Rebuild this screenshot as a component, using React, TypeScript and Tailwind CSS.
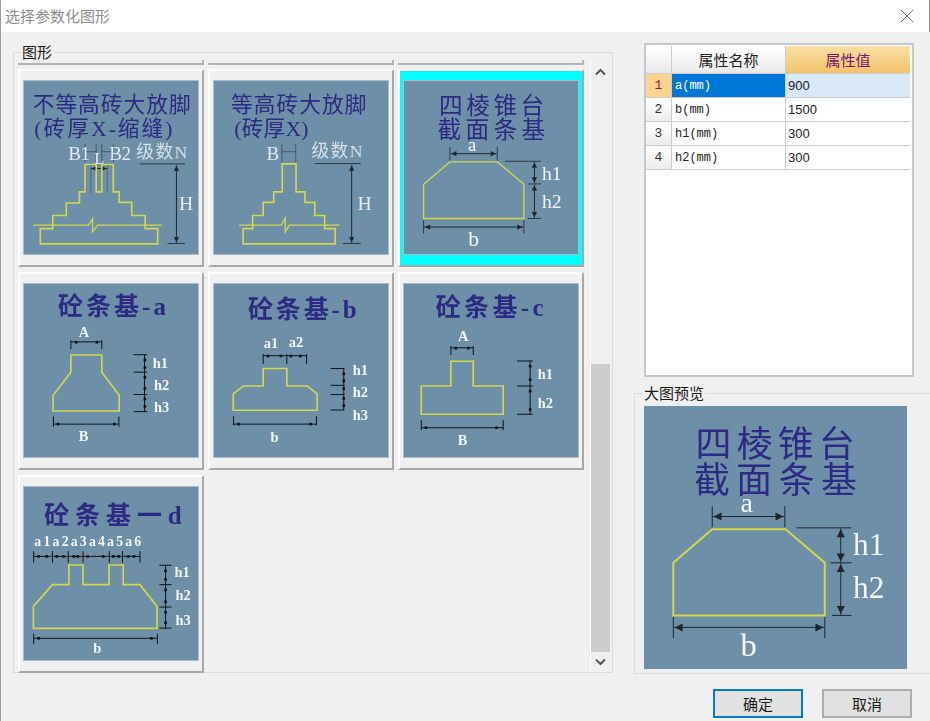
import React from 'react';

const SERIF = "'Liberation Serif','Noto Sans CJK SC',serif";
const INK = '#2c2a82';
const YELLOW = '#d2d84a';
const DARK = '#2f3a42';

type TProps = { x: number; y: number; size: number; w?: number; fill?: string; bold?: boolean; children: React.ReactNode };

const T = ({ x, y, size, w, fill = '#f4f6f8', bold, children }: TProps) => (
  <text
    x={x}
    y={y}
    fontSize={size}
    fill={fill}
    fontFamily={SERIF}
    fontWeight={bold ? 700 : 400}
    textLength={w}
    lengthAdjust={w ? 'spacing' : undefined}
  >
    {children}
  </text>
);

const Title = ({ x, y, size, w, bold, children }: TProps) => (
  <T x={x} y={y} size={size} w={w} bold={bold} fill={INK}>
    {children}
  </T>
);

const Shape = ({ pts, sw = 5 }: { pts: string; sw?: number }) => (
  <polygon points={pts} fill="none" stroke={YELLOW} strokeWidth={sw} />
);

const L = ({ d, sw = 3, c = DARK }: { d: string; sw?: number; c?: string }) => (
  <path d={d} fill="none" stroke={c} strokeWidth={sw} />
);

// dimension line with outward arrow heads
const HDim = ({ x1, x2, y, s = 16, sw = 3 }: { x1: number; x2: number; y: number; s?: number; sw?: number }) => (
  <g fill="#1f262b">
    <path d={`M${x1} ${y}H${x2}`} stroke="#1f262b" strokeWidth={sw} />
    <polygon points={`${x1 + 2},${y} ${x1 + 2 + s},${y - s / 2} ${x1 + 2 + s},${y + s / 2}`} />
    <polygon points={`${x2 - 2},${y} ${x2 - 2 - s},${y - s / 2} ${x2 - 2 - s},${y + s / 2}`} />
  </g>
);

const VDim = ({ x, y1, y2, s = 16, sw = 3 }: { x: number; y1: number; y2: number; s?: number; sw?: number }) => (
  <g fill="#1f262b">
    <path d={`M${x} ${y1}V${y2}`} stroke="#1f262b" strokeWidth={sw} />
    <polygon points={`${x},${y1 + 2} ${x - s / 2},${y1 + 2 + s} ${x + s / 2},${y1 + 2 + s}`} />
    <polygon points={`${x},${y2 - 2} ${x - s / 2},${y2 - 2 - s} ${x + s / 2},${y2 - 2 - s}`} />
  </g>
);

const Sq = ({ x, y }: { x: number; y: number }) => <rect x={x - 4} y={y - 4} width={8} height={8} fill="#111" />;

const Pic = ({ box, children }: { box: string; children: React.ReactNode }) => (
  <svg viewBox={box} className="h-[175px] w-[176px] border border-[#a9bdcc] bg-[#6d8fa8] blur-[0.3px]">
    {children}
  </svg>
);

const Unequal = () => (
  <Pic box="70 241 526 526">
    <Title x={95} y={334} size={66} w={480}>不等高砖大放脚</Title>
    <Title x={100} y={408} size={66} w={420}>(砖厚X-缩缝)</Title>
    <L d="M254 432V488M288 432V488M305 432V488M340 432V488M254 456H288M305 456H340" c="#4a5a66" />
    <L d="M272 495V580M322 495V580" sw={2} c="#4a5a66" />
    <T x={203} y={480} size={58} w={66} fill="#e4ebf0">B1</T>
    <T x={328} y={480} size={58} w={66} fill="#e4ebf0">B2</T>
    <T x={410} y={474} size={54} w={155} fill="#d6e0e6">级数N</T>
    <T x={282} y={494} size={50} fill="#e4ebf0">L</T>
    <T x={540} y={632} size={60} fill="#e4ebf0">H</T>
    <HDim x1={272} x2={322} y={507} s={14} />
    <L d="M420 493H558M505 735H558" />
    <VDim x={532} y1={497} y2={733} />
    <Shape pts="118,690 118,736 475,736 475,690 437,690 437,650 396,650 396,610 358,610 358,578 340,578 340,495 305,495 305,578 288,578 288,495 254,495 254,578 237,578 237,612 197,612 197,650 156,650 156,690" />
    <polyline points="97,679 265,679 277,660 277,700 292,679 488,679" fill="none" stroke={YELLOW} strokeWidth={4} />
  </Pic>
);

const Equal = () => (
  <Pic box="640 241 526 526">
    <Title x={690} y={334} size={66} w={412}>等高砖大放脚</Title>
    <Title x={700} y={408} size={66} w={226}>(砖厚X)</Title>
    <T x={798} y={480} size={58} fill="#e4ebf0">B</T>
    <T x={935} y={473} size={54} w={155} fill="#d6e0e6">级数N</T>
    <T x={1075} y={634} size={60} fill="#e4ebf0">H</T>
    <L d="M845 432V488M887 432V488M845 456H887" c="#4a5a66" />
    <L d="M945 492H1085M1030 735H1085" />
    <VDim x={1057} y1={496} y2={733} />
    <Shape pts="727,690 727,736 1007,736 1007,690 975,690 975,650 945,650 945,610 915,610 915,578 888,578 888,493 846,493 846,578 820,578 820,610 788,610 788,650 756,650 756,690" />
    <polyline points="715,679 843,679 855,658 855,700 868,679 1020,679" fill="none" stroke={YELLOW} strokeWidth={4} />
  </Pic>
);

const Frustum = () => (
  <Pic box="40 242 526 526">
    <Title x={145} y={342} size={72} w={320}>四棱锥台</Title>
    <Title x={140} y={415} size={72} w={328}>截面条基</Title>
    <T x={233} y={454} size={56}>a</T>
    <T x={458} y={543} size={60}>h1</T>
    <T x={458} y={628} size={60}>h2</T>
    <T x={234} y={743} size={66}>b</T>
    <L d="M178 442V484M322 442V484M345 486H455M415 555H455M415 660H455M98 665V706M403 665V706" />
    <HDim x1={180} x2={320} y={463} />
    <VDim x={435} y1={488} y2={553} />
    <VDim x={435} y1={557} y2={658} />
    <HDim x1={100} x2={401} y={686} />
    <Shape pts="178,488 323,488 403,556 403,660 98,660 98,556" sw={4} />
  </Pic>
);

const BaseA = () => (
  <Pic box="70 54 526 526">
    <Title x={172} y={148} size={76} w={328} bold>砼条基-a</Title>
    <T x={235} y={215} size={44} bold>A</T>
    <T x={460} y={308} size={44} bold>h1</T>
    <T x={464} y={376} size={44} bold>h2</T>
    <T x={464} y={442} size={44} bold>h3</T>
    <T x={235} y={530} size={44} bold>B</T>
    <L d="M211 225V252M305 225V252M211 230H305M402 269H443M402 322H443M402 390H443M402 442H443M435 269V442M158 457V488M357 457V488M158 480H357" c="#111" />
    <Sq x={227} y={231} /><Sq x={290} y={231} />
    <Sq x={436} y={285} /><Sq x={436} y={308} /><Sq x={436} y={338} /><Sq x={436} y={372} /><Sq x={436} y={404} /><Sq x={436} y={426} />
    <Sq x={172} y={480} /><Sq x={343} y={480} />
    <Shape pts="211,270 305,270 305,322 358,392 358,440 157,440 157,392 211,322" />
  </Pic>
);

const BaseB = () => (
  <Pic box="640 54 526 526">
    <Title x={742} y={158} size={76} w={330} bold>砼条基-b</Title>
    <T x={790} y={248} size={44} bold>a1</T>
    <T x={866} y={245} size={44} bold>a2</T>
    <T x={1060} y={332} size={44} bold>h1</T>
    <T x={1060} y={398} size={44} bold>h2</T>
    <T x={1060} y={466} size={44} bold>h3</T>
    <T x={810} y={533} size={44} bold>b</T>
    <L d="M788 267V297M860 267V297M920 267V297M788 272H920M993 311H1035M993 362H1035M993 390H1035M993 437H1035M1033 311V437M698 456V484M950 456V484M698 480H950" c="#111" />
    <Sq x={803} y={273} /><Sq x={842} y={273} /><Sq x={872} y={273} /><Sq x={901} y={273} />
    <Sq x={1033} y={327} /><Sq x={1033} y={348} /><Sq x={1033} y={372} /><Sq x={1033} y={402} /><Sq x={1033} y={424} />
    <Sq x={713} y={480} /><Sq x={932} y={480} />
    <Shape pts="788,311 860,311 860,364 922,364 952,388 952,438 697,438 697,388 728,364 788,364" />
  </Pic>
);

const BaseC = () => (
  <Pic box="40 54 526 526">
    <Title x={135} y={150} size={76} w={328} bold>砼条基-c</Title>
    <T x={203} y={228} size={44} bold>A</T>
    <T x={445} y={343} size={44} bold>h1</T>
    <T x={445} y={430} size={44} bold>h2</T>
    <T x={202} y={545} size={44} bold>B</T>
    <L d="M181 243V270M249 243V270M181 248H249M382 288H430M382 364H430M382 450H430M422 288V450M91 468V498M340 468V498M91 491H340" c="#111" />
    <Sq x={196} y={249} /><Sq x={234} y={249} />
    <Sq x={422} y={304} /><Sq x={422} y={345} /><Sq x={422} y={380} /><Sq x={422} y={436} />
    <Sq x={105} y={491} /><Sq x={320} y={491} />
    <Shape pts="181,289 249,289 249,364 340,364 340,450 91,450 91,364 181,364" />
  </Pic>
);

const BaseD = () => (
  <Pic box="70 47 526 526">
    <Title x={130} y={160} size={76} w={418} bold>砼条基一d</Title>
    <T x={100} y={227} size={42} w={325} bold>a1a2a3a4a5a6</T>
    <T x={526} y={320} size={44} bold>h1</T>
    <T x={529} y={392} size={44} bold>h2</T>
    <T x={529} y={466} size={44} bold>h3</T>
    <T x={279} y={552} size={44} bold>b</T>
    <L d="M98 242V277M155 242V277M203 242V277M248 242V277M328 242V277M368 242V277M421 242V277M98 258H421M480 285H517M480 344H517M480 412H517M480 476H517M499 285V476M98 493V525M474 493V525M98 507H474" c="#111" />
    {[113, 137, 168, 189, 220, 232, 262, 310, 340, 356, 385, 403].map((x) => (
      <Sq key={x} x={x} y={258} />
    ))}
    <Sq x={499} y={302} /><Sq x={499} y={328} /><Sq x={499} y={360} /><Sq x={499} y={396} /><Sq x={499} y={428} /><Sq x={499} y={460} />
    <Sq x={113} y={507} /><Sq x={456} y={507} />
    <Shape pts="205,284 248,284 248,344 327,344 327,284 370,284 370,344 421,344 473,410 473,477 97,477 97,410 155,344 205,344" />
  </Pic>
);

const Cell = ({ active, children }: { active?: boolean; children: React.ReactNode }) => (
  <div
    className={
      active
        ? 'h-[198px] w-[186px] border-2 border-t-white border-l-white border-r-[#a8a8a8] border-b-[#a8a8a8] bg-[#00ffff] pt-[9px] pl-[3px]'
        : 'h-[198px] w-[186px] border-2 border-t-white border-l-white border-r-[#a8a8a8] border-b-[#a8a8a8] bg-[#f0f0f0] pt-[9px] pl-[3px]'
    }
  >
    {children}
  </div>
);

const rows = [
  { id: 1, name: 'a(mm)', value: '900' },
  { id: 2, name: 'b(mm)', value: '1500' },
  { id: 3, name: 'h1(mm)', value: '300' },
  { id: 4, name: 'h2(mm)', value: '300' },
];

const PropTable = () => (
  <div className="ml-[10px] h-[334px] w-[270px] border-2 border-[#c3c7d0] bg-white pt-px">
    <div className="grid grid-cols-[26px_114px_124px] grid-rows-[28px_24px_24px_24px_24px] text-[#222]">
      <div className="border-r border-b border-[#c9ccd3] bg-gradient-to-b from-white to-[#e9e9e9]" />
      <div className="flex items-center justify-center border-r border-b border-[#c9ccd3] bg-gradient-to-b from-white to-[#e9e9e9] text-[15px]">
        属性名称
      </div>
      <div className="flex items-center justify-center border-b border-[#c9ccd3] bg-gradient-to-b from-[#fbdfa6] to-[#f3c468] text-[15px] text-[#7a1470]">
        属性值
      </div>
      {rows.map((r) => {
        const on = r.id === 1;
        return (
          <React.Fragment key={r.id}>
            <div
              className={
                on
                  ? 'flex items-center justify-center border-r border-b border-[#c9ccd3] bg-[#fbd48e] font-["Liberation_Mono"] text-[13px] text-[#8a1a5a]'
                  : 'flex items-center justify-center border-r border-b border-[#c9ccd3] bg-gradient-to-b from-white to-[#ececec] font-["Liberation_Mono"] text-[13px] text-[#333]'
              }
            >
              {r.id}
            </div>
            <div
              className={
                on
                  ? 'flex items-center border-r border-b border-[#c9ccd3] bg-[#0078d7] pl-[3px] font-["Liberation_Mono"] text-[12px] text-white'
                  : 'flex items-center border-r border-b border-[#c9ccd3] pl-[3px] font-["Liberation_Mono"] text-[12px] text-[#222]'
              }
            >
              {r.name}
            </div>
            <div
              className={
                on
                  ? 'flex items-center border-b border-[#c9ccd3] bg-[#d8e8f7] pl-[2px] font-["Liberation_Sans"] text-[13px] text-[#222]'
                  : 'flex items-center border-b border-[#c9ccd3] pl-[2px] font-["Liberation_Sans"] text-[13px] text-[#222]'
              }
            >
              {r.value}
            </div>
          </React.Fragment>
        );
      })}
    </div>
  </div>
);

export default function App() {
  return (
    <div className='flex h-[721px] w-[930px] flex-col overflow-hidden border-l border-[#9a9a9a] bg-[#f0f0f0] font-["Noto_Sans_CJK_SC",sans-serif] text-[15px] leading-4 text-[#1a1a1a]'>
      <div className="flex h-8 shrink-0 items-center justify-between border-r border-[#8a8a8a] bg-white pr-[15px] pl-1 text-[#8c8c8c]">
        <span>选择参数化图形</span>
        <svg width="14" height="14" viewBox="0 0 14 14" stroke="#6e6e6e" strokeWidth="1" fill="none">
          <path d="M1 1L13 13M13 1L1 13" />
        </svg>
      </div>

      <div className="flex pt-3 pl-3">
        <fieldset className="h-[629px] w-[600px] shrink-0 border border-[#dcdcdc]">
          <legend className="ml-[7px] px-px">图形</legend>
          <div className="flex h-[612px]">
            <div className="pl-1">
              <div className="mb-1 flex h-[5px] gap-1">
                <div className="w-[186px] border-r-2 border-b-2 border-[#b4b4b4]" />
                <div className="w-[186px] border-r-2 border-b-2 border-[#b4b4b4]" />
                <div className="w-[186px] border-r-2 border-b-2 border-[#b4b4b4]" />
              </div>
              <div className="grid grid-cols-[186px_186px_186px] gap-x-1 gap-y-[5px]">
                <Cell><Unequal /></Cell>
                <Cell><Equal /></Cell>
                <Cell active><Frustum /></Cell>
                <Cell><BaseA /></Cell>
                <Cell><BaseB /></Cell>
                <Cell><BaseC /></Cell>
                <Cell><BaseD /></Cell>
              </div>
            </div>
            <div className="ml-auto flex w-[22px] flex-col border-l border-white">
              <div className="flex h-6 items-center justify-center pr-[3px]">
                <svg width="11" height="8" viewBox="0 0 11 8" fill="none" stroke="#555" strokeWidth="2">
                  <path d="M1 6.5L5.5 2L10 6.5" />
                </svg>
              </div>
              <div className="flex-1" />
              <div className="mr-[2px] h-[288px] bg-[#cdcdcd]" />
              <div className="flex h-5 items-center justify-center pr-[3px]">
                <svg width="11" height="8" viewBox="0 0 11 8" fill="none" stroke="#555" strokeWidth="2">
                  <path d="M1 1.5L5.5 6L10 1.5" />
                </svg>
              </div>
            </div>
          </div>
        </fieldset>

        <div className="ml-[21px] -mt-px flex flex-col">
          <PropTable />
          <fieldset className="mt-2 h-[289px] w-[298px] border border-[#dcdcdc]">
            <legend className="ml-2 px-px">大图预览</legend>
            <svg viewBox="40 106 790 790" className="mt-[5px] ml-[9px] h-[263px] w-[263px] bg-[#6d8fa8] blur-[0.3px]">
              <Title x={195} y={258} size={108} w={478}>四棱锥台</Title>
              <Title x={190} y={368} size={108} w={490}>截面条基</Title>
              <T x={330} y={425} size={84}>a</T>
              <T x={668} y={555} size={94}>h1</T>
              <T x={668} y={683} size={94}>h2</T>
              <T x={330} y={858} size={98}>b</T>
              <L d="M245 407V470M463 407V470M498 472H663M600 577H663M605 735H663M128 740V803M583 740V803" sw={3} c="#1f262b" />
              <HDim x1={247} x2={461} y={438} s={24} sw={3} />
              <VDim x={631} y1={474} y2={575} s={24} sw={3} />
              <VDim x={631} y1={579} y2={733} s={24} sw={3} />
              <HDim x1={130} x2={581} y={771} s={24} sw={3} />
              <Shape pts="245,476 465,476 583,577 583,735 128,735 128,577" sw={6} />
            </svg>
          </fieldset>
        </div>
      </div>

      <div className="mt-[15px] flex justify-end gap-[19px] pr-[18px]">
        <button className="h-[29px] w-[90px] border-2 border-[#0078d7] bg-[#e1e1e1]">确定</button>
        <button className="h-[29px] w-[90px] border-2 border-[#adadad] bg-[#e1e1e1]">取消</button>
      </div>
    </div>
  );
}
